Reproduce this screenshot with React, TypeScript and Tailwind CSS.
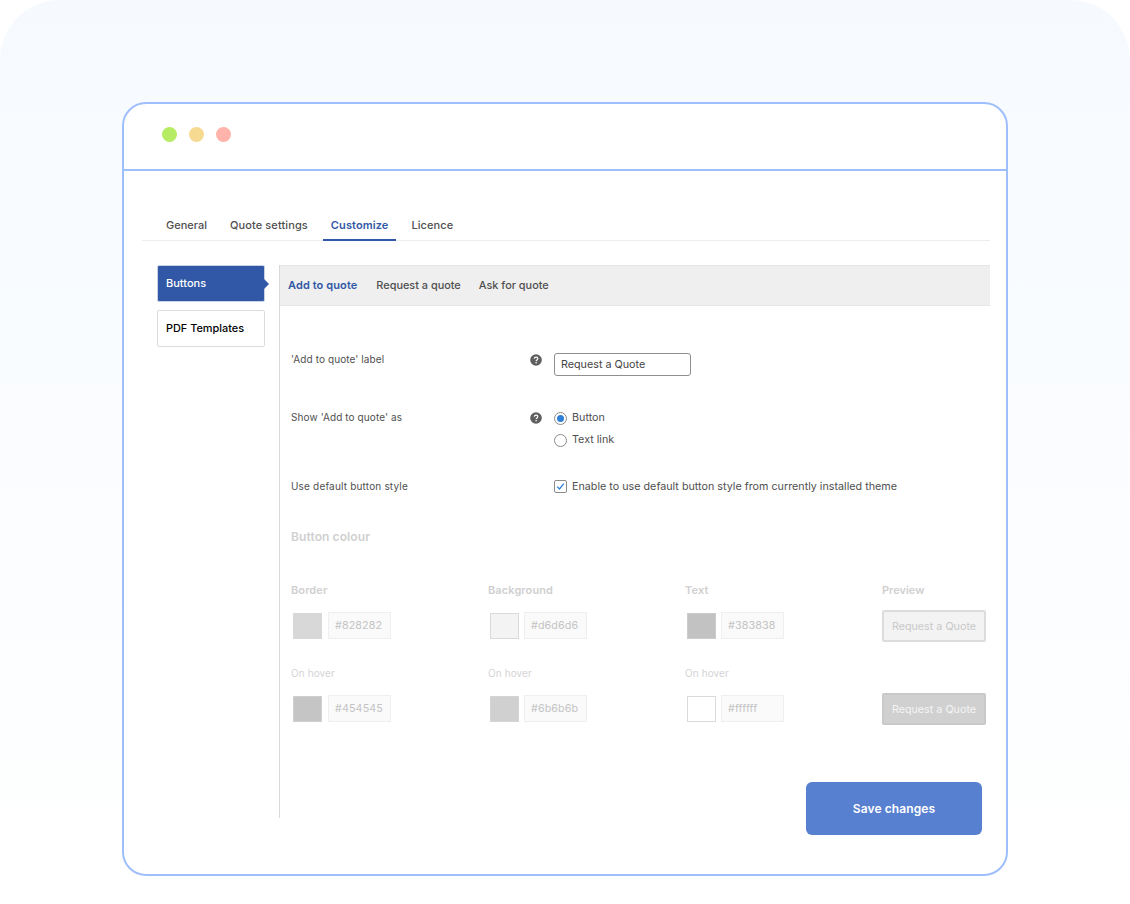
import React from "react";

const Help = () => (
  <svg width="12" height="12" viewBox="0 0 12 12" className="shrink-0">
    <circle cx="6" cy="6" r="5.8" fill="#5f5f5f" />
    <path d="M4.3 4.7c0-1 .8-1.6 1.8-1.6s1.7.6 1.7 1.5c0 1.3-1.6 1.3-1.7 2.5" fill="none" stroke="#fff" strokeWidth="1.2" />
    <circle cx="6.1" cy="8.7" r=".8" fill="#fff" />
  </svg>
);

const ColorField = ({ swatch, value, border, tight }: { swatch: string; value: string; border: string; tight?: boolean }) => (
  <div className="flex items-center pl-[2px]">
    <div className={`w-[29px] h-[26px] border ${swatch} ${border}`} />
    <div className={`${tight ? "ml-[5px]" : "ml-[6px]"} w-[63px] h-[27px] border border-[#efefef] bg-[#fafafa] pl-[6px] text-[10.75px] leading-[25px] text-[#c4c4c4]`}>
      {value}
    </div>
  </div>
);

export default function App() {
  return (
    <div className="w-[1130px] h-[904px] bg-white overflow-hidden font-['Inter',sans-serif]">
      <div className="h-[904px] rounded-t-[60px] bg-gradient-to-b from-[#f6faff] to-[#ffffff] pt-[102px] pl-[122px]">
        <div className="w-[886px] h-[774px] bg-white border-2 border-[#9fbffc] rounded-[24px]">
          <div className="h-[67px] border-b-2 border-[#9fbffc] flex items-center gap-[12px] pl-[38px] pb-[4px]">
            <span className="w-[15px] h-[15px] rounded-full bg-[#b5ec63]" />
            <span className="w-[15px] h-[15px] rounded-full bg-[#f6da92]" />
            <span className="w-[15px] h-[15px] rounded-full bg-[#ffb3ab]" />
          </div>
          <div className="pl-[18px] pr-[16px]">
            <div className="mt-[44px] h-[26px] border-b border-[#eeeeee] flex pl-[16px] gap-[6px] text-[11px] tracking-[0.1px] font-medium text-[#4f4f4f]">
              <div className="px-[8px] pt-[2px] tracking-normal">General</div>
              <div className="px-[8px] pt-[2px] ml-[1px]">Quote settings</div>
              <div className="px-[8px] pt-[2px] ml-[1px] h-[26px] border-b-2 border-[#3158a6] text-[#3158a6] font-semibold">Customize</div>
              <div className="px-[8px] pt-[2px] ml-[1px]">Licence</div>
            </div>
            <div className="flex mt-[24px]">
              <div className="w-[137px] pl-[15px] shrink-0">
                <div className="relative w-[108px] h-[37px] rounded-[2px] bg-[#3158a6] border border-[#c9d2e3] text-white text-[11px] font-medium leading-[35px] pl-[8px]">
                  Buttons
                  <span className="absolute right-[-5px] top-[13px] w-0 h-0 border-y-[5px] border-y-transparent border-l-[5px] border-l-[#3158a6]" />
                </div>
                <div className="mt-[8px] w-[108px] h-[37px] rounded-[2px] bg-white border border-[#dcdcdc] text-black text-[10.9px] font-medium leading-[35px] pl-[8px]">
                  PDF Templates
                </div>
              </div>
              <div className="flex-1 h-[553px] border-l border-[#d9d9d9]">
                <div className="h-[41px] bg-[#efefef] border-y border-[#e6e6e6] flex items-center pl-[8px] pb-[2px] text-[11px] font-medium text-[#4f4f4f] leading-[36px]">
                  <span className="font-semibold text-[#3158a6] tracking-[0.1px]">Add to quote</span>
                  <span className="ml-[19px] text-[10.9px]">Request a quote</span>
                  <span className="ml-[18px] text-[10.9px]">Ask for quote</span>
                </div>
                <div className="pl-[11px] text-[10px] text-[#4f4f4f] tracking-[0.1px]">
                  <div className="flex mt-[47px] h-[24px]">
                    <div className="w-[239px] leading-[12px]">'Add to quote' label</div>
                    <div className="pt-[1px]"><Help /></div>
                    <div className="ml-[12px] w-[137px] h-[23px] border border-[#8f8f8f] rounded-[3px] bg-white text-[10.75px] tracking-normal leading-[21px] pl-[6px] text-[#454545]">Request a Quote</div>
                  </div>
                  <div className="flex mt-[32px]">
                    <div className="w-[239px] leading-[16px]">Show 'Add to quote' as</div>
                    <div className="pt-[3px]"><Help /></div>
                    <div className="ml-[12px] text-[10.75px] tracking-normal pt-[1px]">
                      <div className="flex items-center h-[16px]">
                        <span className="w-[13px] h-[13px] rounded-full border border-[#8c8c8c] flex items-center justify-center"><span className="w-[7px] h-[7px] rounded-full bg-[#2f7fd6]" /></span>
                        <span className="ml-[5px]">Button</span>
                      </div>
                      <div className="flex items-center h-[16px] mt-[6px]">
                        <span className="w-[13px] h-[13px] rounded-full border border-[#8c8c8c]" />
                        <span className="ml-[5px]">Text link</span>
                      </div>
                    </div>
                  </div>
                  <div className="flex mt-[30px] items-center h-[16px]">
                    <div className="w-[263px] tracking-[0.18px]">Use default button style</div>
                    <span className="w-[13px] h-[13px] rounded-[2px] border border-[#8c8c8c] flex items-center justify-center">
                      <svg width="9" height="9" viewBox="0 0 9 9"><path d="M1.2 4.6 3.5 7 7.8 1.6" fill="none" stroke="#2f7fd6" strokeWidth="1.3" /></svg>
                    </span>
                    <span className="ml-[5px] pt-[2px] text-[10.75px] tracking-normal">Enable to use default button style from currently installed theme</span>
                  </div>
                  <div className="mt-[35px] text-[12px] leading-[16px] font-semibold text-[#d0d0d0]">Button colour</div>
                  <div className="flex mt-[38px]">
                    <div className="w-[197px]">
                      <div className="text-[11px] leading-[14px] font-semibold text-[#d0d0d0]">Border</div>
                      <div className="mt-[15px]"><ColorField swatch="bg-[#d8d8d8]" border="border-[#d8d8d8]" value="#828282" /></div>
                      <div className="mt-[27px] text-[10px] leading-[14px] text-[#d4d4d4]">On hover</div>
                      <div className="mt-[15px]"><ColorField swatch="bg-[#c5c5c5]" border="border-[#d0d0d0]" value="#454545" /></div>
                    </div>
                    <div className="w-[197px]">
                      <div className="text-[11px] leading-[14px] font-semibold text-[#d0d0d0]">Background</div>
                      <div className="mt-[15px]"><ColorField tight swatch="bg-[#f3f3f3]" border="border-[#dadada]" value="#d6d6d6" /></div>
                      <div className="mt-[27px] text-[10px] leading-[14px] text-[#d4d4d4]">On hover</div>
                      <div className="mt-[15px]"><ColorField tight swatch="bg-[#d0d0d0]" border="border-[#d4d4d4]" value="#6b6b6b" /></div>
                    </div>
                    <div className="w-[197px]">
                      <div className="text-[11px] leading-[14px] font-semibold text-[#d0d0d0]">Text</div>
                      <div className="mt-[15px]"><ColorField tight swatch="bg-[#c2c2c2]" border="border-[#cccccc]" value="#383838" /></div>
                      <div className="mt-[27px] text-[10px] leading-[14px] text-[#d4d4d4]">On hover</div>
                      <div className="mt-[15px]"><ColorField tight swatch="bg-white" border="border-[#dadada]" value="#ffffff" /></div>
                    </div>
                    <div className="w-[104px]">
                      <div className="text-[11px] leading-[14px] font-semibold text-[#d0d0d0] tracking-normal">Preview</div>
                      <div className="mt-[13px] w-[104px] h-[32px] rounded-[2px] border-2 border-[#dcdcdc] bg-[#f3f3f3] text-[10.75px] tracking-normal leading-[30px] text-center text-[#c9c9c9]">Request a Quote</div>
                      <div className="mt-[51px] w-[104px] h-[32px] rounded-[2px] border-2 border-[#c9c9c9] bg-[#d0d0d0] text-[10.75px] tracking-normal leading-[30px] text-center text-[#f4f4f4]">Request a Quote</div>
                    </div>
                  </div>
                  <div className="flex justify-end mt-[57px] pr-[8px]">
                    <button className="w-[176px] h-[53px] rounded-[6px] bg-[#5880d0] text-white text-[12px] font-semibold">Save changes</button>
                  </div>
                </div>
              </div>
            </div>
          </div>
        </div>
      </div>
    </div>
  );
}
